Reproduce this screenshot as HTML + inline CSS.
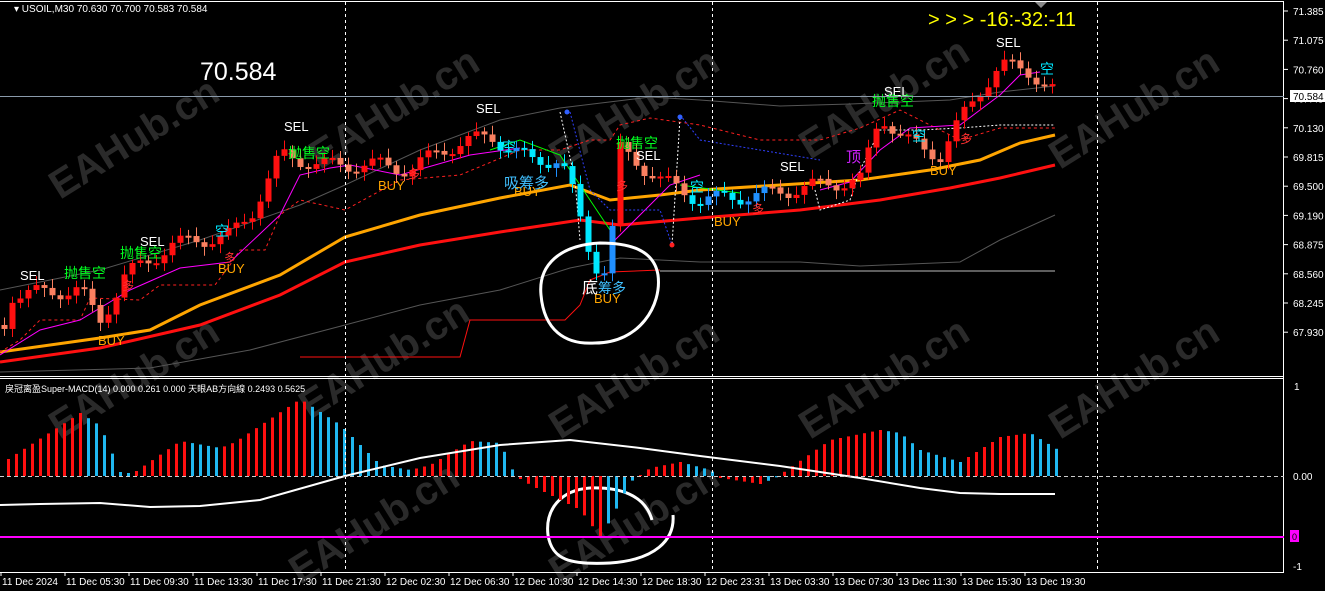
<!DOCTYPE html>
<html><head><meta charset="utf-8"><style>
html,body{margin:0;padding:0;background:#000;width:1325px;height:591px;overflow:hidden}
svg{display:block;position:absolute;left:0;top:0}
text{font-family:"Liberation Sans","Noto Sans CJK SC",sans-serif}
</style></head><body>
<svg id="s" width="1325" height="591" xmlns="http://www.w3.org/2000/svg">
<rect width="1325" height="591" fill="#000"/>
<g id="wm" fill="#2a2a2a" font-size="40" font-weight="bold"></g>
<g id="g"></g>
<line x1="0" y1="1.5" x2="1284" y2="1.5" stroke="#fff"/>
<line x1="1283.5" y1="1" x2="1283.5" y2="573" stroke="#fff"/>
<line x1="0" y1="376.5" x2="1284" y2="376.5" stroke="#fff"/>
<line x1="0" y1="378.5" x2="1284" y2="378.5" stroke="#fff"/>
<line x1="0" y1="572.5" x2="1284" y2="572.5" stroke="#fff"/>
<line x1="0" y1="96.5" x2="1284" y2="96.5" stroke="#8a9aaa"/>
<g stroke="#fff" stroke-dasharray="3,3">
<line x1="345.5" y1="2" x2="345.5" y2="572"/>
<line x1="712.5" y1="2" x2="712.5" y2="572"/>
<line x1="1097.5" y1="2" x2="1097.5" y2="572"/>
</g>
<line x1="0" y1="476.5" x2="1284" y2="476.5" stroke="#ccc" stroke-dasharray="4,3"/>
<line x1="0" y1="537" x2="1284" y2="537" stroke="#ff00ff" stroke-width="2"/>
<polygon points="1035,2 1047,2 1041,8" fill="#888"/>
<text x="14" y="12" fill="#fff" font-size="10">▾ USOIL,M30  70.630 70.700 70.583 70.584</text>
<text x="200" y="80" fill="#fff" font-size="25">70.584</text>
<text x="928" y="26" fill="#ffff00" font-size="20">&gt; &gt; &gt;  -16:-32:-11</text>
<text x="5" y="392" fill="#fff" font-size="9">戾冠离盈Super-MACD(14) 0.000 0.261 0.000  天眼AB方向線 0.2493 0.5625</text>
<g id="ax" fill="#fff" font-size="10"></g>
<rect x="1290" y="90" width="35" height="12" fill="#fff"/>
<text x="1293" y="100" fill="#000" font-size="10">70.584</text>
<rect x="1290" y="530" width="9" height="12" fill="#ff00ff"/>
<text x="1292" y="540" fill="#000" font-size="9">0</text>
<text x="1294" y="390" fill="#fff" font-size="10">1</text>
<text x="1293" y="480" fill="#fff" font-size="10">0.00</text>
<text x="1293" y="570" fill="#fff" font-size="10">-1</text>
</svg>
<script>
(function(){
var NS="http://www.w3.org/2000/svg",G=document.getElementById('g');
function el(t,a,p,txt){var e=document.createElementNS(NS,t);for(var k in a)e.setAttribute(k,a[k]);if(txt)e.textContent=txt;(p||G).appendChild(e);return e;}
function interp(k,x){for(var i=0;i<k.length-1;i++){if(x>=k[i][0]&&x<=k[i+1][0]){var t=(x-k[i][0])/(k[i+1][0]-k[i][0]);return k[i][1]+t*(k[i+1][1]-k[i][1]);}}return x<k[0][0]?k[0][1]:k[k.length-1][1];}
function pl(k,col,w,dash){var d='';for(var i=0;i<k.length;i++)d+=(i?'L':'M')+k[i][0]+','+k[i][1];var a={d:d,stroke:col,'stroke-width':w,fill:'none'};if(dash)a['stroke-dasharray']=dash;el('path',a);}
var W=document.getElementById('wm');
[[60,200],[320,170],[560,170],[810,160],[1060,170],[60,440],[310,420],[560,440],[810,440],[1060,440],[300,585],[560,585]].forEach(function(p){el('text',{x:p[0],y:p[1],transform:'rotate(-32 '+p[0]+' '+p[1]+')'},W,'EAHub.cn');});
var A=document.getElementById('ax'),pr=['71.385','71.075','70.760','70.445','70.130','69.815','69.500','69.190','68.875','68.560','68.245','67.930'];
pr.forEach(function(v,i){var y=11+i*29.2;el('text',{x:1293,y:y+4},A,v);el('line',{x1:1284,y1:y,x2:1288,y2:y,stroke:'#fff'},A);});
var tl=['11 Dec 2024','11 Dec 05:30','11 Dec 09:30','11 Dec 13:30','11 Dec 17:30','11 Dec 21:30','12 Dec 02:30','12 Dec 06:30','12 Dec 10:30','12 Dec 14:30','12 Dec 18:30','12 Dec 23:31','13 Dec 03:30','13 Dec 07:30','13 Dec 11:30','13 Dec 15:30','13 Dec 19:30'];
tl.forEach(function(v,i){var x=1+i*64;el('text',{x:x+1,y:585},A,v);el('line',{x1:x,y1:572,x2:x,y2:576,stroke:'#fff'},A);});
pl([[0,290],[100,270],[200,240],[300,205],[345,185],[420,150],[500,120],[560,108],[650,97],[700,100],[780,106],[850,104],[950,100],[1000,92],[1055,86]],'#555',1);
pl([[0,372],[150,368],[250,350],[345,325],[420,305],[500,290],[570,268],[620,258],[700,262],[800,262],[860,266],[960,262],[1000,240],[1055,215]],'#555',1);
pl([[0,352],[100,338],[150,330],[200,305],[280,275],[345,237],[420,215],[500,198],[570,185],[610,200],[660,195],[700,190],[860,180],[930,170],[980,160],[1020,143],[1055,135]],'#ffa500',3);
pl([[0,362],[100,348],[200,325],[280,295],[345,262],[420,245],[500,232],[580,220],[620,225],[700,218],[800,210],[880,200],[950,188],[1000,178],[1055,165]],'#ff1010',3);
pl([[300,357],[460,357],[470,320],[565,320],[580,305],[590,280],[610,272],[660,270]],'#ff1010',1);
pl([[660,271],[1055,271]],'#bbb',1);
pl([[0,352],[20,340],[40,320],[80,320],[90,298],[140,300],[160,285],[215,285],[230,265],[240,250],[265,250],[280,215],[300,200],[345,210],[400,180],[460,175],[520,150],[560,150],[590,140],[610,140],[620,125],[650,118],[700,125],[760,140],[820,140],[860,128],[900,110],[960,140],[1000,128],[1055,128]],'#ff2020',1,'3,3');
pl([[0,355],[40,330],[80,320],[130,290],[180,268],[230,262],[280,215],[300,175],[330,168],[350,165],[400,175],[470,155],[520,148]],'#ff00ff',1);
pl([[610,245],[640,215],[670,185],[700,175]],'#ff00ff',1);
pl([[820,190],[850,182],[880,150],[910,128],[960,125],[1000,95],[1020,75],[1040,72]],'#ff00ff',1);
pl([[490,150],[520,140],[560,155],[590,200],[610,230]],'#00ff00',1);
pl([[680,185],[740,193]],'#00ff00',1);
pl([[560,112],[575,180],[580,240]],'#fff',1,'2,2');
pl([[570,112],[590,190],[610,210],[660,210],[672,245]],'#3040ff',1,'2,2');
pl([[680,115],[700,140],[760,150],[820,160]],'#3040ff',1,'2,2');
pl([[680,118],[672,245]],'#fff',1,'2,2');
pl([[815,190],[820,210],[850,200],[860,170],[880,130],[920,130],[960,128],[1000,125],[1055,125]],'#fff',1,'2,2');
el('circle',{cx:567,cy:112,r:2.5,fill:'#3060ff'});el('circle',{cx:680,cy:117,r:2.5,fill:'#3060ff'});el('circle',{cx:672,cy:245,r:2.5,fill:'#ff2020'});
var K=[[4,325],[10,295],[50,292],[80,290],[92,310],[100,320],[112,300],[125,275],[150,260],[170,245],[200,240],[230,235],[250,215],[280,155],[320,165],[380,165],[410,170],[440,150],[490,135],[510,150],[530,160],[560,160],[575,200],[585,240],[595,265],[605,270],[612,230],[620,150],[640,165],[660,180],[700,200],[760,195],[820,185],[860,180],[880,115],[905,140],[925,150],[940,155],[960,120],[980,90],[1000,65],[1030,72],[1058,95]];
var prv=interp(K,0),cyanZ=[[500,615],[690,770]];
for(var x=4;x<=1058;x+=8){var c=interp(K,x)+(Math.sin(x*1.7)*8),o=prv;prv=c;
 var tp=Math.min(o,c),bt=Math.max(o,c),h=Math.max(bt-tp,2);
 var xx=x,inZ=cyanZ.some(function(z){return xx>=z[0]&&xx<=z[1];});
 var col=c<o?'#ff1010':'#fa8060';if(inZ)col=c<o?'#2090ff':'#00e8ff';
 el('line',{x1:x+0.5,y1:tp-3-Math.abs(Math.sin(x))*6,x2:x+0.5,y2:bt+3+Math.abs(Math.cos(x))*6,stroke:col});
 el('rect',{x:x-2.5,y:tp,width:6,height:h,fill:col});}
function T(x,y,s,c,f){el('text',{x:x,y:y,fill:c,'font-size':f||13},G,s);}
[[20,280,'SEL'],[140,246,'SEL'],[284,131,'SEL'],[476,113,'SEL'],[636,160,'SEL'],[780,171,'SEL'],[884,96,'SEL'],[996,47,'SEL']].forEach(function(a){T(a[0],a[1],a[2],'#fff');});
[[98,345,'BUY'],[218,273,'BUY'],[378,190,'BUY'],[514,196,'BUY'],[714,226,'BUY'],[594,303,'BUY'],[930,175,'BUY']].forEach(function(a){T(a[0],a[1],a[2],'#ffa500');});
[[64,278,'抛售空'],[120,258,'抛售空'],[288,158,'抛售空'],[616,148,'抛售空'],[872,106,'抛售空']].forEach(function(a){T(a[0],a[1],a[2],'#00ff20',14);});
[[215,236,'空'],[502,152,'空'],[690,192,'空'],[912,141,'空'],[1040,74,'空']].forEach(function(a){T(a[0],a[1],a[2],'#00e8ff',14);});
T(504,188,'吸筹多','#40c0ff',15);T(582,293,'底','#fff',16);T(598,293,'筹多','#40c0ff',14);T(846,162,'顶','#d020ff',15);
[[122,290,'多'],[224,262,'多'],[408,178,'多'],[616,190,'多'],[752,213,'多'],[960,143,'多']].forEach(function(a){T(a[0],a[1],a[2],'#ff3030',12);});
el('path',{d:'M600,243 C560,245 538,265 541,295 C544,330 565,345 595,343 C640,343 662,305 658,275 C654,250 630,243 600,243Z',stroke:'#fff','stroke-width':3,fill:'none'});
el('path',{d:'M590,488 C560,490 545,510 548,535 C552,560 570,565 610,563 C655,560 675,540 673,515 M590,488 C620,487 645,495 652,520',stroke:'#fff','stroke-width':3,fill:'none'});
var H=[[8,459],[80,413],[100,426],[120,472],[128,473],[136,471],[180,441],[220,448],[235,442],[300,399],[340,425],[380,465],[410,470],[430,465],[470,441],[500,443],[515,476],[530,485],[580,510],[600,537],[610,520],[630,482],[650,468],[680,462],[710,470],[720,478],[760,484],[775,478],[830,440],[880,430],[900,433],[920,450],[960,462],[1000,437],[1030,433],[1058,450]];
var pv=476;for(var x2=8;x2<=1058;x2+=8){var v=interp(H,x2);var cl=((v<pv&&v<476)||(v>pv&&v>476))?'#ff1010':'#20b8f0';if(x2<=8)cl='#ff1010';pv=v;
 el('rect',{x:x2-1,y:Math.min(v,476),width:3,height:Math.max(Math.abs(v-476),1),fill:cl});}
pl([[0,505],[40,504],[100,503],[150,507],[200,506],[260,500],[345,476],[420,458],[500,445],[570,440],[640,448],[700,456],[780,466],[860,478],[920,488],[960,493],[1000,494],[1055,494]],'#fff',2);
})();
</script>
</body></html>
